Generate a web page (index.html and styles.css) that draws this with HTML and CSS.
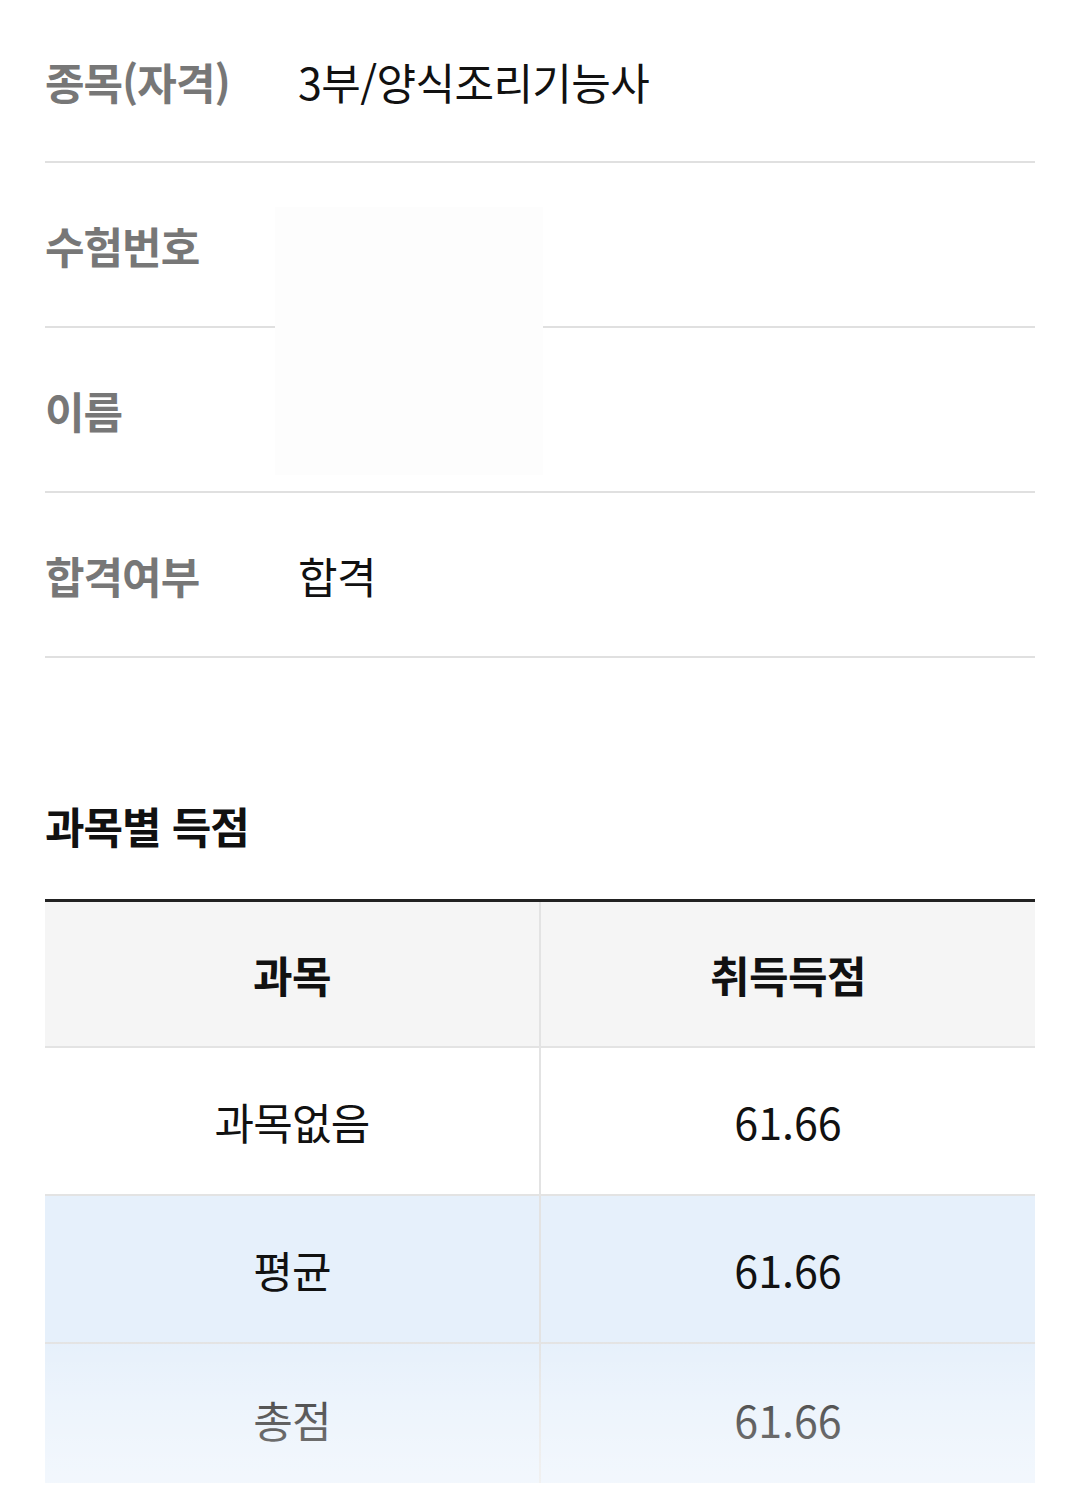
FILE: index.html
```html
<!DOCTYPE html>
<html lang="ko">
<head>
<meta charset="utf-8">
<title>과목별 득점</title>
<link rel="stylesheet" href="styles.css">
</head>
<body>
<div class="page">
  <div class="info-list">
    <div class="info-row first">
      <div class="info-label">종목(자격)</div>
      <div class="info-value">3부/양식조리기능사</div>
    </div>
    <div class="info-row">
      <div class="info-label">수험번호</div>
      <div class="info-value"></div>
    </div>
    <div class="info-row">
      <div class="info-label">이름</div>
      <div class="info-value"></div>
    </div>
    <div class="info-row">
      <div class="info-label">합격여부</div>
      <div class="info-value">합격</div>
    </div>
    <div class="redact"></div>
  </div>

  <h2 class="section-title">과목별 득점</h2>

  <div class="score-wrap">
    <table class="score-table">
      <thead>
        <tr>
          <th>과목</th>
          <th>취득득점</th>
        </tr>
      </thead>
      <tbody>
        <tr class="row-normal">
          <td>과목없음</td>
          <td class="num">61.66</td>
        </tr>
        <tr class="row-blue">
          <td>평균</td>
          <td class="num">61.66</td>
        </tr>
        <tr class="row-blue row-last">
          <td>총점</td>
          <td class="num">61.66</td>
        </tr>
      </tbody>
    </table>
    <div class="fade"></div>
  </div>
</div>
</body>
</html>
```

FILE: styles.css
```css
html, body {
  margin: 0;
  padding: 0;
  background: #ffffff;
}

body {
  font-family: "Noto Sans CJK KR", "Noto Sans", sans-serif;
  color: #111111;
}

.page {
  padding: 0 45px;
}

.info-list {
  position: relative;
}

.info-row {
  display: flex;
  align-items: center;
  height: 163px;
  border-bottom: 2px solid #e0e0e0;
  box-sizing: content-box;
}

.info-row.first {
  height: 161px;
}

.info-label {
  width: 253px;
  flex: none;
  font-size: 43px;
  font-weight: 700;
  color: #777777;
  letter-spacing: -1px;
}

.info-value {
  font-size: 43px;
  font-weight: 400;
  color: #111111;
  letter-spacing: -0.6px;
}

.redact {
  position: absolute;
  left: 230px;
  top: 207px;
  width: 268px;
  height: 268px;
  background: #fdfdfd;
}

.section-title {
  margin: 0;
  height: 241px;
  display: flex;
  align-items: center;
  font-size: 43px;
  font-weight: 700;
  color: #111111;
  letter-spacing: -1px;
  padding-top: 92px;
  box-sizing: border-box;
}

.score-wrap {
  position: relative;
  height: 584px;
  overflow: hidden;
}

.score-table {
  width: 100%;
  border-collapse: collapse;
  table-layout: fixed;
  border-top: 3px solid #222222;
}

.score-table th,
.score-table td {
  text-align: center;
  vertical-align: middle;
  font-size: 43px;
  padding: 0;
  border-bottom: 2px solid #e3e3e3;
}

.score-table th + th,
.score-table td + td {
  border-left: 2px solid #e3e3e3;
}

.score-table th {
  height: 144px;
  background: #f5f5f5;
  font-weight: 700;
  letter-spacing: -0.5px;
}

.score-table td {
  font-weight: 400;
  height: 146px;
  letter-spacing: -0.8px;
}

.score-table td.num {
  letter-spacing: 0;
}

.row-blue td {
  background: #e6f0fb;
}

.row-last td {
  height: 150px;
  border-bottom: none;
}

.fade {
  position: absolute;
  left: 0;
  right: 0;
  bottom: 0;
  height: 145px;
  background: linear-gradient(to bottom, rgba(255,255,255,0) 0%, rgba(255,255,255,0.3) 50%, rgba(255,255,255,0.5) 100%);
  pointer-events: none;
}
```
